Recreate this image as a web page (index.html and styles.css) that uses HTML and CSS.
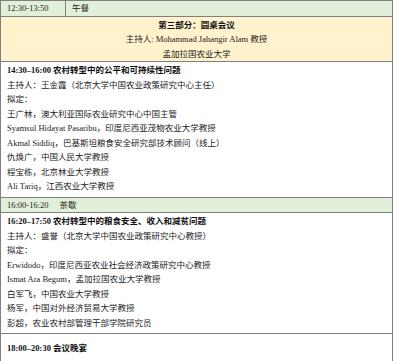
FILE: index.html
```html
<!DOCTYPE html>
<html lang="zh-CN">
<head>
<meta charset="UTF-8">
<meta name="viewport" content="width=device-width, initial-scale=1.0">
<title>议程</title>
<link rel="stylesheet" href="styles.css">
</head>
<body>

<table class="agenda">
 <tr class="row-break">
  <td class="time-cell">12:30-13:50</td>
  <td>午餐</td>
 </tr>
 <tr class="row-part">
  <td colspan="2">
   <div class="bold">第三部分：圆桌会议</div>
   <div>主持人: Mohammad Jahangir Alam 教授</div>
   <div>孟加拉国农业大学</div>
  </td>
 </tr>
 <tr class="row-session">
  <td colspan="2">
   <div class="bold">14:30–16:00 农村转型中的公平和可持续性问题</div>
   <div>主持人：王金霞（北京大学中国农业政策研究中心主任）</div>
   <div>拟定：</div>
   <div>王广林，澳大利亚国际农业研究中心中国主管</div>
   <div>Syamsul Hidayat Pasaribu，印度尼西亚茂物农业大学教授</div>
   <div>Akmal Siddiq，巴基斯坦粮食安全研究部技术顾问（线上）</div>
   <div>仇焕广，中国人民大学教授</div>
   <div>程宝栋，北京林业大学教授</div>
   <div>Ali Tariq，江西农业大学教授</div>
  </td>
 </tr>
 <tr class="row-break">
  <td colspan="2">16:00-16:20<span class="gap"></span>茶歇</td>
 </tr>
 <tr class="row-session">
  <td colspan="2">
   <div class="bold">16:20–17:50 农村转型中的粮食安全、收入和减贫问题</div>
   <div>主持人：盛誉（北京大学中国农业政策研究中心教授）</div>
   <div>拟定：</div>
   <div>Erwidodo，印度尼西亚农业社会经济政策研究中心教授</div>
   <div>Ismat Ara Begum，孟加拉国农业大学教授</div>
   <div>白军飞，中国农业大学教授</div>
   <div>杨军，中国对外经济贸易大学教授</div>
   <div>彭超，农业农村部管理干部学院研究员</div>
  </td>
 </tr>
 <tr class="row-dinner">
  <td colspan="2"><div class="bold">18:00–20:30 会议晚宴</div></td>
 </tr>
</table>

</body>
</html>
```

FILE: styles.css
```css
body, html {
 margin: 0;
 background-color: #fff;
 font-family: "Liberation Serif", "Noto Sans CJK SC", serif;
 font-size: 8.5px;
 color: #222;
}
.agenda {
 width: 393px;
 table-layout: fixed;
 border-collapse: collapse;
 border: 1px solid #808080;
}
.agenda td {
 border: 1px solid #808080;
 padding: 0 6px;
 line-height: 14.5px;
 vertical-align: top;
}
.time-cell {
 width: 52px;
}
.row-break td {
 background-color: #e2efd9;
 height: 14px;
}
.row-part td {
 background-color: #fff2cc;
 text-align: center;
 padding-top: 1px;
}
.row-session td {
 padding-top: 1px;
 padding-bottom: 3px;
}
.row-dinner td {
 padding-top: 7px;
 padding-bottom: 6px;
}
.bold {
 font-weight: bold;
 color: #111;
}
.gap {
 display: inline-block;
 width: 11px;
}
```
